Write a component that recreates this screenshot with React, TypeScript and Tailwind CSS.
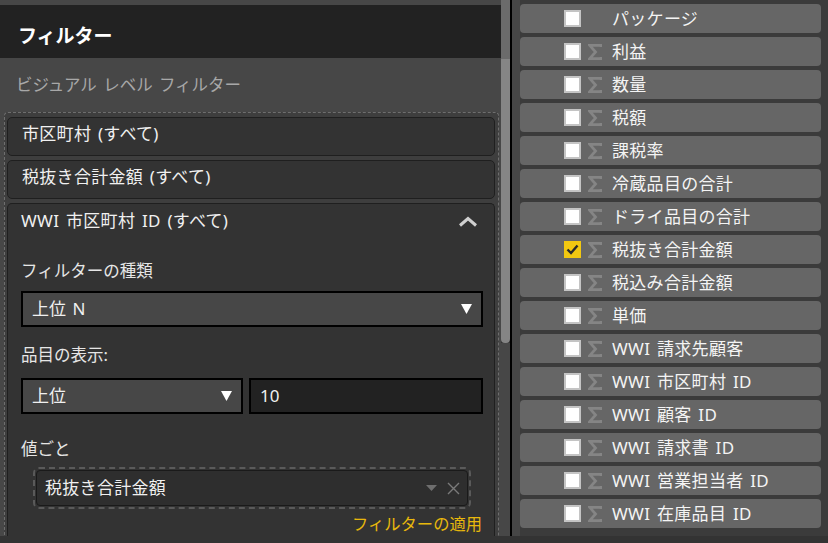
import React from 'react'

const fields = [
  { name: 'パッケージ', sigma: false, checked: false },
  { name: '利益', sigma: true, checked: false },
  { name: '数量', sigma: true, checked: false },
  { name: '税額', sigma: true, checked: false },
  { name: '課税率', sigma: true, checked: false },
  { name: '冷蔵品目の合計', sigma: true, checked: false },
  { name: 'ドライ品目の合計', sigma: true, checked: false },
  { name: '税抜き合計金額', sigma: true, checked: true },
  { name: '税込み合計金額', sigma: true, checked: false },
  { name: '単価', sigma: true, checked: false },
  { name: 'WWI 請求先顧客', sigma: true, checked: false },
  { name: 'WWI 市区町村 ID', sigma: true, checked: false },
  { name: 'WWI 顧客 ID', sigma: true, checked: false },
  { name: 'WWI 請求書 ID', sigma: true, checked: false },
  { name: 'WWI 営業担当者 ID', sigma: true, checked: false },
  { name: 'WWI 在庫品目 ID', sigma: true, checked: false },
]

function Caret() {
  return (
    <svg width="11" height="10" viewBox="0 0 11 10">
      <polygon points="0,0 11,0 5.5,10" fill="#ffffff" />
    </svg>
  )
}

function Sigma() {
  return (
    <svg width="14" height="16" viewBox="0 0 14 16">
      <polyline points="13,3 13,1.4 1.8,1.4 7.6,8 1.8,14.6 13,14.6 13,13" fill="none" stroke="#858585" strokeWidth="2.7" strokeLinejoin="miter" />
    </svg>
  )
}

function Checkbox({ checked }: { checked: boolean }) {
  if (checked) {
    return (
      <div className="w-[17px] h-[17px] bg-[#f2c811] flex items-center justify-center">
        <svg width="13" height="11" viewBox="0 0 13 11">
          <polyline points="1.5,5.5 5,9 11.5,1.5" fill="none" stroke="#2a2a2a" strokeWidth="2.4" />
        </svg>
      </div>
    )
  }
  return <div className="w-[17px] h-[17px] bg-white border-[2px] border-[#c4c4c4]" />
}

function FilterCard({ label }: { label: string }) {
  return (
    <div className="h-[39px] bg-[#333333] border border-[#1f1f1f] rounded-[5px] flex items-center pl-[14px] pb-[6px] text-[17px] tracking-[0.3px] [word-spacing:2px] text-[#f0f0f0]">
      {label}
    </div>
  )
}

export default function App() {
  return (
    <div
      className="w-[828px] h-[543px] bg-[#333333] overflow-hidden flex flex-col leading-[24px]"
      style={{ fontFamily: '"Noto Sans", "Noto Sans CJK JP", sans-serif' }}
    >
      <div className="flex h-[536px]">
        {/* left: filters pane */}
        <div className="w-[501px] flex flex-col overflow-hidden">
          <div className="h-[5px] bg-[#474747]" />
          <div className="h-[54px] bg-[#222222] flex items-center pl-[18px] pt-[9px] text-[19px] font-bold text-white">
            フィルター
          </div>
          <div className="flex-1 bg-[#474747] flex flex-col">
            <div className="h-[54px] flex items-center pl-[16px] text-[16.5px] [word-spacing:2px] text-[#a8a8a8]">
              ビジュアル レベル フィルター
            </div>
            <div className="ml-[4px] w-[495px] flex-1 border border-dashed border-[#6e6e6e] border-b-0 rounded-t-[4px] bg-[#3e3e3e] pl-[2px] pr-[3px] pt-[4px] flex flex-col gap-[4px]">
              <FilterCard label="市区町村 (すべて)" />
              <FilterCard label="税抜き合計金額 (すべて)" />
              <div className="flex-1 bg-[#333333] border border-[#1f1f1f] border-b-0 rounded-t-[5px] pl-[13px] pr-[11px] flex flex-col">
                <div className="h-[34px] flex items-center justify-between text-[17px] text-[#f0f0f0]">
                  <span className="tracking-[0.3px] [word-spacing:2px]">WWI 市区町村 ID (すべて)</span>
                  <svg width="20" height="11" viewBox="0 0 20 11" className="mr-[5px]">
                    <polyline points="2,9.5 10,2.5 18,9.5" fill="none" stroke="#d0d0d0" strokeWidth="3" />
                  </svg>
                </div>
                <div className="mt-[21px] text-[16.5px] text-[#e6e6e6]">フィルターの種類</div>
                <div className="mt-[8px] h-[36px] bg-[#474747] border-[2px] border-black flex items-center justify-between pl-[9px] pr-[9px] text-[17px] [word-spacing:2px] text-[#f0f0f0]">
                  <span>上位 N</span>
                  <Caret />
                </div>
                <div className="mt-[16px] text-[16.5px] text-[#e6e6e6]">品目の表示:</div>
                <div className="mt-[11px] flex gap-[6px]">
                  <div className="w-[222px] h-[36px] bg-[#474747] border-[2px] border-black flex items-center justify-between pl-[9px] pr-[9px] text-[17px] text-[#f0f0f0]">
                    <span>上位</span>
                    <Caret />
                  </div>
                  <div className="flex-1 h-[36px] bg-[#222222] border-[2px] border-black flex items-center pl-[9px] text-[17px] text-[#f0f0f0]">
                    10
                  </div>
                </div>
                <div className="mt-[23px] text-[16.5px] text-[#e6e6e6]">値ごと</div>
                <div className="mt-[6px] ml-[12px] w-[438px] h-[42px] border-[2px] border-dashed border-[#5a5a5a] rounded-[6px] p-[1px]">
                  <div className="h-full bg-[#2e2e2e] border border-[#1a1a1a] rounded-[4px] flex items-center justify-between pl-[8px] pr-[7px] text-[17px] tracking-[0.3px] text-[#f0f0f0]">
                    <span>税抜き合計金額</span>
                    <div className="flex items-center gap-[10px]">
                      <svg width="11" height="6" viewBox="0 0 11 6">
                        <polygon points="0,0 11,0 5.5,6" fill="#6e6e6e" />
                      </svg>
                      <svg width="13" height="13" viewBox="0 0 13 13">
                        <path d="M1 1 L12 12 M12 1 L1 12" stroke="#7a7a7a" strokeWidth="1.4" />
                      </svg>
                    </div>
                  </div>
                </div>
                <div className="mt-[3px] text-right text-[16.3px] text-[#e8b80c] pr-[1px]">フィルターの適用</div>
              </div>
            </div>
          </div>
        </div>
        {/* left scrollbar */}
        <div className="w-[9px] flex flex-col">
          <div className="h-[59px] bg-[#6b6b6b]" />
          <div className="h-[284px] bg-[#858585] rounded-b-[4px]" />
          <div className="flex-1 bg-[#474747]" />
        </div>
        <div className="w-[2px] bg-black" />
        {/* right: fields list */}
        <div className="w-[8px] bg-[#464646]" />
        <div className="flex-1 bg-[#3b3b3b] pt-[4px] flex flex-col gap-[4px]">
          {fields.map(f => (
            <div
              key={f.name}
              className="w-[301px] h-[29px] bg-[#666666] rounded-[4px] flex items-center pl-[44px] text-[17px] tracking-[0.3px] [word-spacing:2px] text-[#f4f4f4]"
            >
              <Checkbox checked={f.checked} />
              <span className="w-[31px] pl-[7px] flex items-center">{f.sigma && <Sigma />}</span>
              <span>{f.name}</span>
            </div>
          ))}
        </div>
      </div>
      <div className="flex-1 bg-[#333333]" />
    </div>
  )
}
